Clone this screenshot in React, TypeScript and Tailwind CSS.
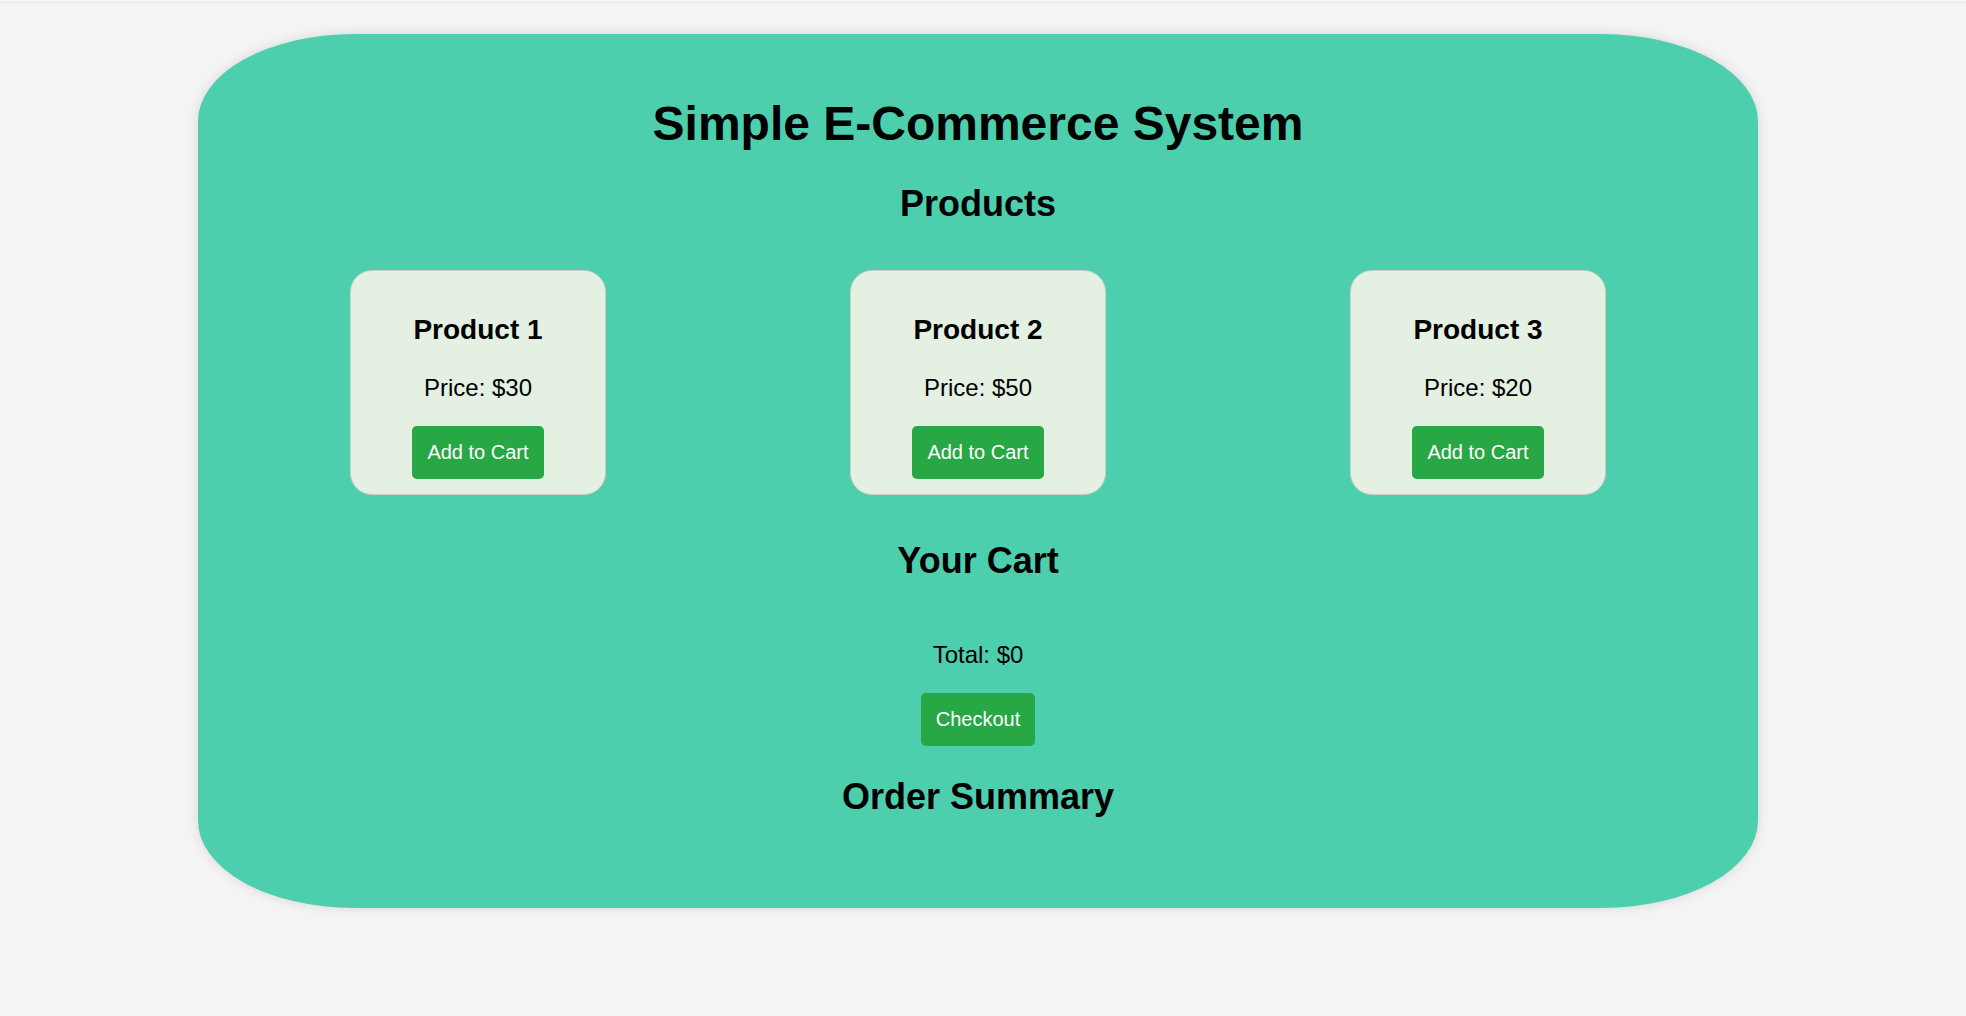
import React from "react";

const products = [
  { name: "Product 1", price: 30 },
  { name: "Product 2", price: 50 },
  { name: "Product 3", price: 20 },
];

export default function App() {
  return (
    <div
      className="min-h-[1016px] w-full bg-[#f4f4f4] text-black"
      style={{ fontFamily: '"Liberation Sans", Arial, sans-serif' }}
    >
      <div className="h-[2px] bg-[#f4f4f4]" />
      <div className="h-px bg-[#e6e6e6]" />
      <div className="pt-[31px] pb-[107px]">
        <div className="ml-[198px] w-[1560px] rounded-[10%] bg-[#4dcfae] p-[30px] text-center shadow-[0_0_12px_rgba(0,0,0,0.12)]">
          <h1 className="mt-[32px] text-[48px] font-bold leading-[55px]">
            Simple E-Commerce System
          </h1>
          <h2 className="mt-[32px] text-[36px] font-bold leading-[41px]">Products</h2>
          <div className="mt-[30px] flex justify-around">
            {products.map((p) => (
              <div
                key={p.name}
                className="my-[16px] flex w-[256px] flex-col items-center rounded-[22px] border border-[#c8cfc6] bg-[#e4f0e2] px-[13px] pt-[43px] pb-[15px]"
              >
                <h3 className="text-[28px] font-bold leading-[32px]">{p.name}</h3>
                <p className="mt-[28px] text-[24px] leading-[28px]">Price: ${p.price}</p>
                <button className="mt-[24px] rounded-[5px] bg-[#28a745] px-[15px] py-[15px] text-[20px] leading-[23px] text-white">
                  Add to Cart
                </button>
              </div>
            ))}
          </div>
          <h2 className="mt-[29px] text-[36px] font-bold leading-[41px]">Your Cart</h2>
          <p className="mt-[60px] text-[24px] leading-[28px]">Total: $0</p>
          <button className="mt-[24px] rounded-[5px] bg-[#28a745] px-[15px] py-[15px] text-[20px] leading-[23px] text-white">
            Checkout
          </button>
          <h2 className="mt-[30px] text-[36px] font-bold leading-[41px]">Order Summary</h2>
          <div className="h-[61px]" />
        </div>
      </div>
    </div>
  );
}
